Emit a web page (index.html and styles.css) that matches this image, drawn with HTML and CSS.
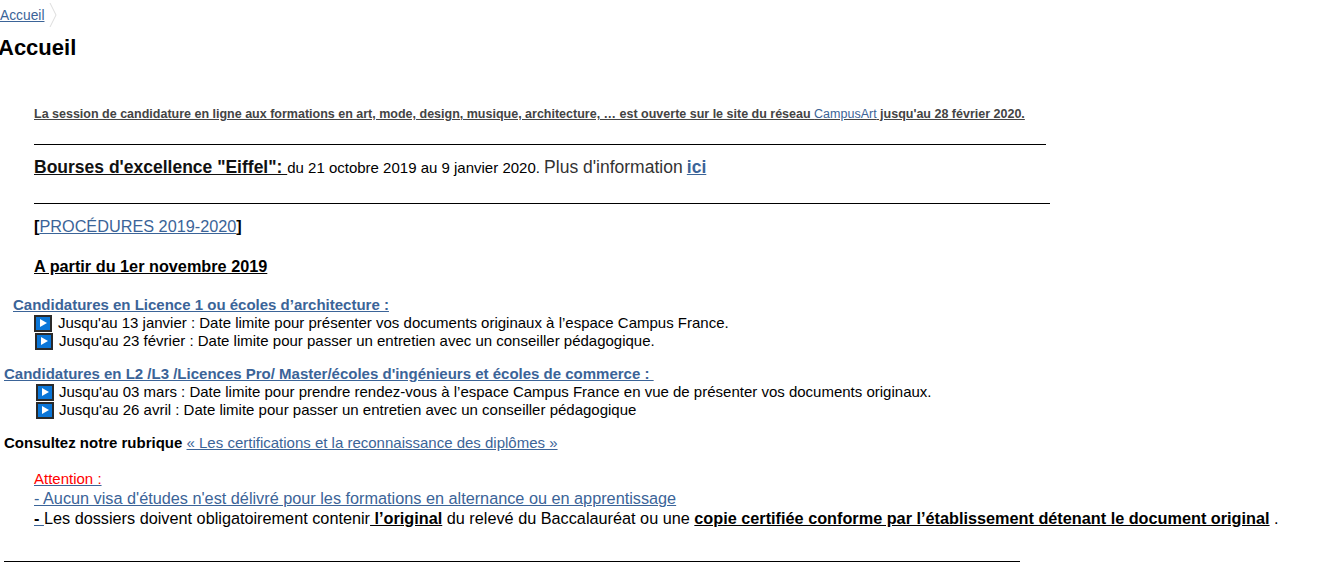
FILE: index.html
```html
<!DOCTYPE html>
<html lang="fr">
<head>
    <meta charset="UTF-8">
    <title>Accueil</title>
    <link rel="stylesheet" href="styles.css">
</head>
<body>
    <nav class="breadcrumb">
        <a href="#">Accueil</a>
        <svg class="crumb-sep" width="8" height="26" viewBox="0 0 8 26"><path d="M1 1 L7 13 L1 25" fill="none" stroke="#ddd" stroke-width="1"/></svg>
    </nav>
    <h1 class="page-title">Accueil</h1>

    <div class="content">
        <p class="session"><a class="dark" href="#">La session de candidature en ligne aux formations en art, mode, design, musique, architecture, … est ouverte sur le site du réseau <span class="normal blue">CampusArt</span> jusqu'au 28 février 2020.</a></p>
        <hr class="rule rule-1">
        <p class="bourses"><a class="black big" href="#"><b>Bourses d'excellence "Eiffel": </b></a>du 21 octobre 2019 au 9 janvier 2020. <span class="plus">Plus d'information</span> <a href="#" class="ici">ici</a></p>
        <hr class="rule rule-2">
        <p class="procedures"><b>[</b><a href="#">PROCÉDURES 2019-2020</a><b>]</b></p>
        <p class="partir"><u>A partir du 1er novembre 2019</u></p>

        <h2 class="cand cand-1"><a href="#">Candidatures en Licence 1 ou écoles d’architecture :</a></h2>
        <ul class="dates dates-1">
            <li><span class="play"><svg width="10" height="10" viewBox="0 0 10 10"><path d="M2 1 L9 5 L2 9 Z" fill="#fff"/></svg></span>Jusqu'au 13 janvier : Date limite pour présenter vos documents originaux à l’espace Campus France.</li>
            <li class="shift"><span class="play"><svg width="10" height="10" viewBox="0 0 10 10"><path d="M2 1 L9 5 L2 9 Z" fill="#fff"/></svg></span>Jusqu'au 23 février : Date limite pour passer un entretien avec un conseiller pédagogique.</li>
        </ul>

        <h2 class="cand cand-2"><a href="#">Candidatures en L2 /L3 /Licences Pro/ Master/écoles d'ingénieurs et écoles de commerce :&nbsp;</a></h2>
        <ul class="dates dates-2">
            <li><span class="play"><svg width="10" height="10" viewBox="0 0 10 10"><path d="M2 1 L9 5 L2 9 Z" fill="#fff"/></svg></span>Jusqu'au 03 mars : Date limite pour prendre rendez-vous à l’espace Campus France en vue de présenter vos documents originaux.</li>
            <li><span class="play"><svg width="10" height="10" viewBox="0 0 10 10"><path d="M2 1 L9 5 L2 9 Z" fill="#fff"/></svg></span>Jusqu'au 26 avril : Date limite pour passer un entretien avec un conseiller pédagogique</li>
        </ul>

        <p class="consultez"><b>Consultez notre rubrique</b> <a href="#">« Les certifications et la reconnaissance des diplômes »</a></p>

        <div class="attention">
            <a href="#"><span class="red">Attention :</span></a><br>
            <a href="#">- Aucun visa d'études n'est délivré pour les formations en alternance ou en apprentissage</a><br>
            <a href="#" class="tiret"><b>- </b></a>Les dossiers doivent obligatoirement contenir<u><b> l’original</b></u> du relevé du Baccalauréat ou une <u><b>copie certifiée conforme par l’établissement détenant le document original</b></u> .
        </div>
        <hr class="rule rule-3">
    </div>
</body>
</html>
```

FILE: styles.css
```css
body {
    margin: 0;
    font-family: "Liberation Sans", Arial, sans-serif;
    font-size: 15px;
    color: #000;
    background: #fff;
    height: 563px;
    overflow: hidden;
}
a {
    color: #3b6498;
}
p {
    margin: 0;
}
.breadcrumb {
    display: flex;
    align-items: center;
    height: 30px;
    font-size: 13.8px;
    gap: 5px;
}
.crumb-sep {
    flex: none;
}
.page-title {
    margin: 4px 0 0 -2px;
    font-size: 22px;
    line-height: 28px;
}
.content {
    padding-left: 34px;
}
.session {
    margin-top: 44px;
    font-size: 12.5px;
    line-height: 16px;
    font-weight: bold;
    color: #444;
}
.dark {
    color: #444;
}
.normal {
    font-weight: normal;
}
.blue {
    color: #3b6498;
}
.rule {
    height: 1px;
    border: 0;
    background: #000;
    margin: 0;
}
.rule-1 {
    margin-top: 22px;
    width: 1012px;
}
.bourses {
    margin-top: 12px;
    line-height: 20px;
    font-size: 15px;
}
.black {
    color: #111;
}
.big {
    font-size: 17.5px;
}
.plus {
    font-size: 17.5px;
    color: #333;
}
.ici {
    font-size: 17.5px;
    font-weight: bold;
}
.rule-2 {
    margin-top: 25px;
    width: 1016px;
}
.procedures {
    margin-top: 12px;
    font-size: 16.25px;
    line-height: 20px;
}
.partir {
    margin-top: 21px;
    font-size: 16.25px;
    font-weight: bold;
    line-height: 18px;
}
.cand {
    font-size: 15px;
    font-weight: bold;
    line-height: 18px;
    margin: 0;
}
.cand-1 {
    margin: 21px 0 0 -21px;
}
.cand-2 {
    margin: 15px 0 0 -30px;
}
.dates {
    list-style: none;
    margin: 0;
    padding: 0;
    line-height: 18px;
}
.dates li {
    display: flex;
    align-items: center;
}
.dates-1 {
    margin-left: 0;
}
.dates-2 {
    margin-left: 2px;
}
.dates-2 .play {
    margin-right: 5px;
}
.shift {
    margin-left: 1px;
}
.play {
    flex: none;
    display: flex;
    align-items: center;
    justify-content: center;
    box-sizing: border-box;
    width: 18px;
    height: 17px;
    margin-right: 6px;
    background: #0a76d8;
    border: 2px solid #2a2a2a;
}
.consultez {
    margin: 15px 0 0 -30px;
    line-height: 18px;
}
.attention {
    margin-top: 16px;
    line-height: 20px;
    font-size: 16.25px;
}
.attention .red {
    font-size: 15px;
    line-height: 15px;
    color: #f00;
}
.tiret b {
    color: #000;
}
.rule-3 {
    margin: 33px 0 0 -30px;
    width: 1016px;
}
```
